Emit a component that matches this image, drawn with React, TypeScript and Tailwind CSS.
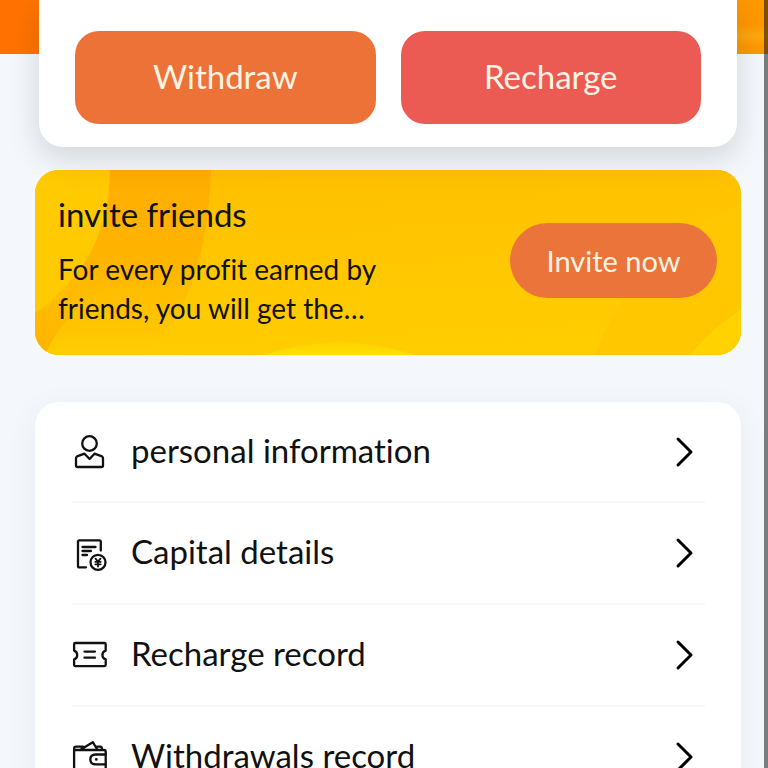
import type { ReactNode } from "react";

function Icon({ children }: { children: ReactNode }) {
  return (
    <svg
      viewBox="0 0 36 36"
      className="size-9 shrink-0"
      fill="none"
      stroke="currentColor"
      strokeWidth="2.3"
      strokeLinecap="round"
      strokeLinejoin="round"
      aria-hidden="true"
    >
      {children}
    </svg>
  );
}

const menu = [
  {
    label: "personal information",
    icon: (
      <Icon>
        <circle cx="17.5" cy="9.5" r="7.3" />
        <path d="M4 24.2 Q4 23 5 22.4 L12.5 19.7 L17.6 25 L22.5 19.7 L30 22.4 Q31 23 31 24.2 V31.4 Q31 33 29.4 33 H5.6 Q4 33 4 31.4 Z" />
      </Icon>
    ),
  },
  {
    label: "Capital details",
    icon: (
      <Icon>
        <path d="M14 32.3 H7.4 Q6 32.3 6 30.9 V6.8 Q6 5.4 7.4 5.4 H27.4 Q28.8 5.4 28.8 6.8 V15.5 M10.5 12 H23.5 M10.5 16 H19 M10.5 20 H15" />
        <circle cx="26" cy="27.3" r="7.5" />
        <path d="M23.5 23.6 L26 26.6 L28.5 23.6 M23.3 26.8 H28.7 M23.3 29.3 H28.7 M26 26.8 V31.5" strokeWidth="1.8" />
      </Icon>
    ),
  },
  {
    label: "Recharge record",
    icon: (
      <Icon>
        <path d="M3.4 6 H32.4 Q33.7 6 33.7 7.3 V13.6 Q30.4 14.6 30.4 18 Q30.4 21.4 33.7 22.4 V27.8 Q33.7 29.1 32.4 29.1 H3.4 Q2.1 29.1 2.1 27.8 V22.4 Q5.2 21.4 5.2 18 Q5.2 14.6 2.1 13.6 V7.3 Q2.1 6 3.4 6 Z" />
        <path d="M12.5 14.6 H23 M12.5 20.7 H23" />
      </Icon>
    ),
  },
  {
    label: "Withdrawals record",
    icon: (
      <Icon>
        <path d="M2.1 11 V31 Q2.1 33 4.1 33 H31.7 Q33.7 33 33.7 31 V12.7 Q33.7 11 32 11 H3.5 Q2.1 11 2.1 9.5 Q2.1 7.7 4 7.7 H11 M8.8 10.5 L20.8 3.2 L25.3 10.5 M25 7.7 H28.5 Q30 7.7 30 10.5" />
        <path d="M33.5 15.5 H23.5 Q18.3 15.8 18.3 20.4 Q18.3 25 23.5 25.3 H33.5" />
        <circle cx="24.3" cy="20.4" r="0.7" fill="currentColor" strokeWidth="1.4" />
      </Icon>
    ),
  },
];

function Banner() {
  return (
    <section className="relative mt-[23px] flex h-[185px] items-center justify-between overflow-hidden rounded-3xl bg-[#ffc900] pr-6 pb-1 pl-[23px]">
      <svg
        viewBox="0 0 706 185"
        preserveAspectRatio="none"
        className="absolute inset-0 size-full"
        aria-hidden="true"
      >
        <defs>
          <linearGradient id="base" x1="0.2" y1="0" x2="0.4" y2="1">
            <stop offset="0" stopColor="#ffbf00" />
            <stop offset="0.6" stopColor="#ffc800" />
            <stop offset="1" stopColor="#ffcd00" />
          </linearGradient>
          <linearGradient id="ribbon" x1="0" y1="0" x2="0" y2="1">
            <stop offset="0" stopColor="#ffad00" />
            <stop offset="0.5" stopColor="#ffb500" />
            <stop offset="1" stopColor="#ffcd00" />
          </linearGradient>
          <linearGradient id="fold" x1="0.8" y1="0" x2="0.2" y2="1">
            <stop offset="0.2" stopColor="#ffb500" stopOpacity="0" />
            <stop offset="1" stopColor="#ffb400" />
          </linearGradient>
          <linearGradient id="glow" x1="0" y1="0" x2="0" y2="1">
            <stop offset="0" stopColor="#ffd200" />
            <stop offset="1" stopColor="#ffe000" />
          </linearGradient>
        </defs>
        <path d="M0 0 H706 V185 H0 Z" fill="url(#base)" />
        <path d="M0 0 H75 Q75 90 0 143 Z" fill="#ffca00" />
        <path d="M75 0 H176 Q172 130 110 185 H10 L0 143 Q75 90 75 0 Z" fill="url(#ribbon)" />
        <path d="M75 72 Q50 120 0 143 V185 H10 Q25 148 75 110 Z" fill="url(#fold)" />
        <path d="M230 185 Q300 160 380 185 Z" fill="url(#glow)" />
        <path d="M560 185 Q600 75 706 35 V140 Q680 155 655 185 Z" fill="#ffc700" />
        <path d="M655 185 Q680 155 706 140 V185 Z" fill="#ffd200" />
      </svg>
      <div className="relative">
        <h2 className="text-[33px] leading-10">invite friends</h2>
        <p className="mt-4 line-clamp-2 w-[350px] text-[28px] leading-[39px]">
          For every profit earned by friends, you will get the…
        </p>
      </div>
      <button
        type="button"
        className="relative h-[75px] w-[207px] rounded-full bg-[#eb743b] text-[29px] text-[#fff3e2]"
      >
        Invite now
      </button>
    </section>
  );
}

export default function App() {
  return (
    <main className="relative h-screen overflow-hidden bg-[#f4f8fc] bg-[linear-gradient(0deg,#ffa81000,#ffa810,#ffa81000),linear-gradient(90deg,#ff7200,#ff9900)] bg-[length:40px_22px,100%_54px] bg-[position:right_25px,0_0] bg-no-repeat pr-[27px] pl-[35px] font-['Lato',sans-serif] text-[#111] [font-variant-ligatures:none]">
      <section className="relative z-10 mx-1 grid grid-cols-2 gap-[25px] rounded-b-3xl bg-white px-9 pt-[31px] pb-[23px] text-[33px] shadow-[0_10px_32px_rgba(0,0,0,0.15)]">
        <button type="button" className="h-[93px] rounded-3xl bg-[#ec7238] pb-0.5 text-[#fff3e2]">
          Withdraw
        </button>
        <button type="button" className="h-[93px] rounded-3xl bg-[#eb5a53] pb-0.5 text-[#fff3e2]">
          Recharge
        </button>
      </section>

      <Banner />

      <nav className="mt-[47px] rounded-3xl bg-white pr-9 pl-[37px] shadow-[0_8px_32px_rgba(0,0,0,0.06)]">
        <ul>
          {menu.map((item) => (
            <li key={item.label} className="group border-b-2 border-[#f7f7f7] last:border-0">
              <a href="#" className="flex h-[100px] items-center text-[33px] group-first:h-[99px]">
                {item.icon}
                <span className="ml-[23px] flex-1 pb-0.5">{item.label}</span>
                <svg
                  viewBox="0 0 20 32"
                  className="mr-2.5 h-8 w-5"
                  fill="none"
                  stroke="#000"
                  strokeWidth="3"
                  strokeLinecap="round"
                  strokeLinejoin="round"
                  aria-hidden="true"
                >
                  <path d="M3 3 L16 16 L3 29" />
                </svg>
              </a>
            </li>
          ))}
        </ul>
      </nav>

      <div className="absolute inset-y-0 right-0 z-20 w-1 bg-black/50" />
    </main>
  );
}
